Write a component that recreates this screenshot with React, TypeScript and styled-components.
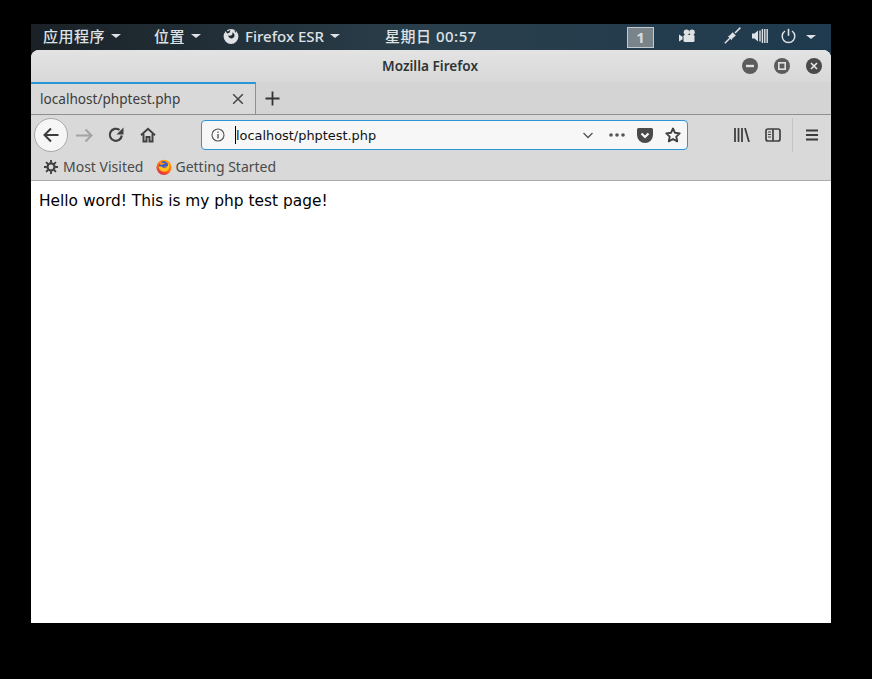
import * as React from 'react';
import styled, { createGlobalStyle } from 'styled-components';

const GlobalStyle = createGlobalStyle`
  html, body {
    margin: 0;
    height: 100%;
    background: #000;
    overflow: hidden;
  }
`;

const uiFont = `'Noto Sans', 'Noto Sans CJK SC', sans-serif`;
const pageFont = `'DejaVu Sans', sans-serif`;

const Screen = styled.div`
  width: 800px;
  height: 599px;
  margin: 24px 0 0 31px;
  display: flex;
  flex-direction: column;
  background: linear-gradient(90deg, #1a2126 0%, #2a3f4c 50%, #1f3a4e 100%);
`;

const Panel = styled.div`
  height: 26px;
  flex-shrink: 0;
  box-sizing: border-box;
  padding: 0 15px 3px 0;
  display: flex;
  align-items: center;
  color: #dfe2e4;
  font: 500 15px ${uiFont};
`;

const PanelItem = styled.div<{ $left: number }>`
  display: flex;
  align-items: center;
  margin-left: ${(p) => p.$left}px;
  gap: 6px;
  white-space: nowrap;
`;

const CjkLabel = styled.span`
  letter-spacing: 0.5px;
`;

const Caret = styled.span<{ $left?: number }>`
  width: 0;
  height: 0;
  margin-left: ${(p) => p.$left ?? 0}px;
  border-left: 5px solid transparent;
  border-right: 5px solid transparent;
  border-top: 4px solid #dfe2e4;
`;

const PanelIcons = styled.div`
  margin: 3px 0 0 auto;
  display: flex;
  align-items: center;
`;

const Workspace = styled.div`
  width: 27px;
  height: 21px;
  box-sizing: border-box;
  border: 1px solid #c3c9cc;
  background: #78838a;
  color: #d8dcde;
  font: 700 15px/18px ${uiFont};
  text-align: center;
`;

const PanelIcon = styled.svg<{ $left: number }>`
  margin-left: ${(p) => p.$left}px;
  margin-top: -3px;
  fill: #dfe2e4;
  stroke: #dfe2e4;
  flex-shrink: 0;
`;

const Window = styled.div`
  flex: 1;
  min-height: 0;
  display: flex;
  flex-direction: column;
  background: #fff;
  border-radius: 8px 8px 0 0;
  overflow: hidden;
`;

const TitleBar = styled.div`
  height: 32px;
  flex-shrink: 0;
  box-sizing: border-box;
  padding: 0 2px 2px 0;
  position: relative;
  display: flex;
  align-items: center;
  justify-content: center;
  background: linear-gradient(#e3e3e3, #d8d8d8);
  color: #2e3436;
  font: 600 13.6px ${uiFont};
`;

const WindowControls = styled.div`
  position: absolute;
  right: 9px;
  top: 8px;
  display: flex;
  gap: 16px;
`;

const WindowButton = styled.svg`
  display: block;
`;

const TabStrip = styled.div`
  height: 33px;
  flex-shrink: 0;
  display: flex;
  background: #d4d4d4;
  border-bottom: 1px solid #8f8f8f;
  box-sizing: border-box;
`;

const Tab = styled.div`
  width: 225px;
  height: 32px;
  box-sizing: border-box;
  display: flex;
  align-items: center;
  justify-content: space-between;
  padding: 0 11px 1px 9px;
  background: #d9d9d9;
  border-top: 2px solid #2a94d4;
  border-right: 1px solid #8f8f8f;
  color: #3c3c3c;
  font: 13.6px ${uiFont};
`;

const NewTab = styled.svg`
  margin: 9px 0 0 9px;
  display: block;
`;

const NavBar = styled.div`
  height: 40px;
  flex-shrink: 0;
  display: flex;
  align-items: center;
  background: #d9d9d9;
`;

const BackButton = styled.div`
  width: 32px;
  height: 32px;
  margin-left: 3px;
  border-radius: 50%;
  background: #f6f6f6;
  border: 1px solid #a8a8a8;
  display: flex;
  align-items: center;
  justify-content: center;
  flex-shrink: 0;
`;

const NavIcon = styled.svg<{ $left: number }>`
  margin-left: ${(p) => p.$left}px;
  flex-shrink: 0;
  display: block;
`;

const UrlBar = styled.div`
  width: 487px;
  height: 30px;
  margin-left: 45px;
  padding-right: 6px;
  box-sizing: border-box;
  display: flex;
  align-items: center;
  background: #f7f7f7;
  border: 1px solid #2a94d4;
  border-radius: 4px;
  flex-shrink: 0;
`;

const UrlText = styled.div`
  margin-left: 10px;
  flex: 1;
  height: 18px;
  border-left: 1px solid #000;
  color: #111;
  font: 12.9px/20px ${pageFont};
  white-space: nowrap;
`;

const Separator = styled.div`
  width: 1px;
  height: 34px;
  margin-left: 11px;
  background: #c4c4c4;
`;

const BookmarkBar = styled.div`
  height: 26px;
  flex-shrink: 0;
  box-sizing: border-box;
  display: flex;
  align-items: center;
  padding: 0 0 2px 13px;
  background: #d9d9d9;
  border-bottom: 1px solid #ababab;
  color: #4a4a4a;
  font: 14px ${uiFont};
`;

const Bookmark = styled.div<{ $gap: number; $after: number }>`
  display: flex;
  align-items: center;
  gap: ${(p) => p.$gap}px;
  margin-right: ${(p) => p.$after}px;
`;

const Content = styled.div`
  flex: 1;
  padding: 9px 8px;
  background: #fff;
  color: #000;
  font: 15.4px/22px ${pageFont};
`;

const ICON = '#404040';

const FirefoxLogo = () => (
  <svg width="16" height="16" viewBox="0 0 16 16">
    <defs>
      <linearGradient id="fxOuter" x1="0.8" y1="0" x2="0.2" y2="1">
        <stop offset="0" stopColor="#ffb000" />
        <stop offset="0.55" stopColor="#ff6a1a" />
        <stop offset="1" stopColor="#d6234f" />
      </linearGradient>
    </defs>
    <circle cx="8" cy="8.300" r="7.600" fill="url(#fxOuter)" />
    <circle cx="7.600" cy="7" r="4.700" fill="#2f5bd0" />
    <path d="M2.600 7.500c.3 3.500 3.200 5.600 6.300 5.100 2.500-.4 4.200-2.300 4.400-4.700.1-1.400-.3-2.700-1.100-3.800.2 2.300-.8 4.100-2.800 4.700-1.600.5-3.100 0-3.900-1.200z" fill="#ffc21a" />
    <path d="M7.200 8.300c1.500.6 3.200-.2 3.700-1.700-.9.700-2.300.9-3.700 1.700z" fill="#ff7a1a" />
    <path d="M4.400 1.500c.4 1.500 1.500 2.300 3 2.400 1 .1 1.900.4 2.300 1.200-1.500-.4-2.900 0-3.700 1.100L3.700 5.200z" fill="#ff8a1f" />
  </svg>
);

export default function App() {
  return (
    <>
      <GlobalStyle />
      <Screen>
        <Panel>
          <PanelItem $left={12}>
            <CjkLabel>应用程序</CjkLabel>
            <Caret />
          </PanelItem>
          <PanelItem $left={33}>
            <CjkLabel>位置</CjkLabel>
            <Caret />
          </PanelItem>
          <PanelItem $left={22}>
            <svg width="16" height="16" viewBox="0 0 16 16">
              <circle cx="8" cy="8.500" r="7.400" fill="#dfe2e4" />
              <path d="M1.500 .5L5 3.500 7.500 1.500 6.500 4.800 4 5.500z" fill="#1f2a31" />
              <path d="M10.500 .6L12 3.300l1.500-1.500-1 3.200z" fill="#1f2a31" />
              <path d="M5.200 7.600c.3 1.900 1.800 3.100 3.500 2.900 1.700-.2 2.900-1.500 2.800-3.200-.1-1.400-1-2.500-2.300-2.800.5 1 .4 1.900-.3 2.500-.9.700-2.300.9-3.700.6z" fill="#1f2a31" />
            </svg>
            <span>Firefox ESR</span>
            <Caret />
          </PanelItem>
          <PanelItem $left={45}>
            <CjkLabel>星期日 00:57</CjkLabel>
          </PanelItem>
          <PanelIcons>
            <Workspace>1</Workspace>
            <PanelIcon $left={25} width="16" height="14" viewBox="0 0 16 14" stroke="none">
              <circle cx="7.500" cy="3.300" r="2.800" stroke="none" />
              <circle cx="13" cy="3.300" r="2.800" stroke="none" />
              <rect x="4.500" y="6" width="11" height="7" rx="1.200" stroke="none" />
              <path d="M0 5.500l3.600 2.200v2.600L0 12.500z" stroke="none" />
            </PanelIcon>
            <PanelIcon $left={29} width="17" height="17" viewBox="0 0 17 17">
              <path d="M.8 16.200l5-5M11 6l5.400-5.400" strokeWidth="1.500" fill="none" />
              <path d="M4.500 9.800L8.600 5.200l3.200 3.200-4.600 4.100z" stroke="none" />
              <path d="M8 12.800l-3.800-3.800" strokeWidth="1" fill="none" />
            </PanelIcon>
            <PanelIcon $left={11} width="16" height="16" viewBox="0 0 16 16">
              <path d="M0 5.500h2.500L6 2.500v11l-3.500-3H0z" stroke="none" />
              <path d="M8 2.500v11M10.400 1v14M12.800 1v14M15.200 1v14" strokeWidth="1.400" fill="none" />
            </PanelIcon>
            <PanelIcon $left={13} width="15" height="16" viewBox="0 0 15 16">
              <path d="M7.500 .8v7" strokeWidth="1.600" fill="none" />
              <path d="M4 3a6.300 6.300 0 1 0 7 0" strokeWidth="1.500" fill="none" />
            </PanelIcon>
            <Caret $left={10} />
          </PanelIcons>
        </Panel>
        <Window>
          <TitleBar>
            Mozilla Firefox
            <WindowControls>
              <WindowButton width="16" height="16" viewBox="0 0 16 16">
                <circle cx="8" cy="8" r="8" fill="#5c5c5c" />
                <rect x="4" y="6.800" width="8" height="2.400" fill="#e0e0e0" />
              </WindowButton>
              <WindowButton width="16" height="16" viewBox="0 0 16 16">
                <circle cx="8" cy="8" r="8" fill="#5c5c5c" />
                <rect x="4.800" y="4.800" width="6.400" height="6.400" fill="none" stroke="#e0e0e0" strokeWidth="1.600" />
              </WindowButton>
              <WindowButton width="16" height="16" viewBox="0 0 16 16">
                <circle cx="8" cy="8" r="8" fill="#4a4a4a" />
                <path d="M5 5l6 6M11 5l-6 6" stroke="#e8e8e8" strokeWidth="1.600" />
              </WindowButton>
            </WindowControls>
          </TitleBar>
          <TabStrip>
            <Tab>
              <span>localhost/phptest.php</span>
              <svg width="12" height="12" viewBox="0 0 12 12">
                <path d="M1.200 1.200l9.600 9.600M10.800 1.200l-9.600 9.600" stroke="#444" strokeWidth="1.500" />
              </svg>
            </Tab>
            <NewTab width="15" height="15" viewBox="0 0 15 15">
              <path d="M7.500 .5v14M.5 7.500h14" stroke="#333" strokeWidth="1.800" />
            </NewTab>
          </TabStrip>
          <NavBar>
            <BackButton>
              <svg width="18" height="18" viewBox="0 0 18 18" fill="none" stroke="#3c3c3c" strokeWidth="2">
                <path d="M16.500 9H2.500M9 2.500L2.500 9 9 15.500" />
              </svg>
            </BackButton>
            <NavIcon $left={8} width="17" height="15" viewBox="0 0 17 15" fill="none" stroke="#a3a3a3" strokeWidth="2">
              <path d="M0 7.500h15.500M9.500 1.500l6 6-6 6" />
            </NavIcon>
            <NavIcon $left={15} width="16" height="16" viewBox="0 0 16 16" fill="none" stroke={ICON} strokeWidth="2.200">
              <path d="M13.800 8.500A6 6 0 1 1 11.500 3" />
              <path d="M15.500 .5v7h-7z" fill={ICON} stroke="none" />
            </NavIcon>
            <NavIcon $left={16} width="16" height="16" viewBox="0 0 16 16" fill="none" stroke={ICON} strokeWidth="2">
              <path d="M1 8.300L8 1.800l7 6.500" />
              <path d="M3.500 7v7.500h3V10h3v4.500h3V7" />
            </NavIcon>
            <UrlBar>
              <NavIcon $left={9} width="14" height="14" viewBox="0 0 14 14" fill="none" stroke="#555" strokeWidth="1.100">
                <circle cx="7" cy="7" r="6" />
                <path d="M7 6v4.500M7 3.500v1.300" strokeWidth="1.400" />
              </NavIcon>
              <UrlText>localhost/phptest.php</UrlText>
              <NavIcon $left={0} width="10" height="7" viewBox="0 0 10 7" fill="none" stroke="#555" strokeWidth="1.300">
                <path d="M.5 1l4.500 4.500L9.500 1" />
              </NavIcon>
              <NavIcon $left={16} width="16" height="4" viewBox="0 0 16 4" fill="#555">
                <circle cx="2" cy="2" r="1.800" />
                <circle cx="8" cy="2" r="1.800" />
                <circle cx="14" cy="2" r="1.800" />
              </NavIcon>
              <NavIcon $left={12} width="16" height="15" viewBox="0 0 16 15">
                <path d="M1.500 0h13A1.500 1.500 0 0 1 16 1.500V7A8 8 0 0 1 0 7V1.500A1.500 1.500 0 0 1 1.500 0z" fill="#4a4a4a" />
                <path d="M4.500 5.500L8 9l3.500-3.500" fill="none" stroke="#f7f7f7" strokeWidth="2.200" />
              </NavIcon>
              <NavIcon $left={12} width="16" height="16" viewBox="0 0 16 16" fill="none" stroke={ICON} strokeWidth="1.900">
                <path d="M8 1.500l2 4.300 4.700.6-3.400 3.200.9 4.700L8 12l-4.200 2.300.9-4.700L1.300 6.400 6 5.800z" strokeLinejoin="round" />
              </NavIcon>
            </UrlBar>
            <NavIcon $left={46} width="16" height="14" viewBox="0 0 16 14" fill="none" stroke={ICON} strokeWidth="1.800">
              <path d="M1 0v14M4.500 0v14M8 0v14M11 0l4 14" />
            </NavIcon>
            <NavIcon $left={15} width="16" height="14" viewBox="0 0 16 14" fill="none" stroke={ICON} strokeWidth="1.700">
              <rect x="1" y="1" width="14" height="12" rx="2" />
              <path d="M8 1v12" />
              <path d="M3 4h3M3 6.500h3M3 9h3" strokeWidth="1" />
            </NavIcon>
            <Separator />
            <NavIcon $left={13} width="12" height="12" viewBox="0 0 12 12" fill="none" stroke="#3c3c3c" strokeWidth="1.900">
              <path d="M0 1.500h12M0 6h12M0 10.500h12" />
            </NavIcon>
          </NavBar>
          <BookmarkBar>
            <Bookmark $gap={5} $after={13}>
              <svg width="14" height="14" viewBox="0 0 15 15" fill="none" stroke="#3f3f3f">
                <circle cx="7.500" cy="7.500" r="3.800" strokeWidth="2.400" />
                <path d="M7.500 0v3M7.500 12v3M0 7.500h3M12 7.500h3M2.200 2.200l2.100 2.100M10.700 10.700l2.100 2.100M12.800 2.200l-2.100 2.100M4.300 10.700l-2.100 2.100" strokeWidth="2" />
              </svg>
              <span>Most Visited</span>
            </Bookmark>
            <Bookmark $gap={3} $after={0}>
              <FirefoxLogo />
              <span>Getting Started</span>
            </Bookmark>
          </BookmarkBar>
          <Content>Hello word! This is my php test page!</Content>
        </Window>
      </Screen>
    </>
  );
}
